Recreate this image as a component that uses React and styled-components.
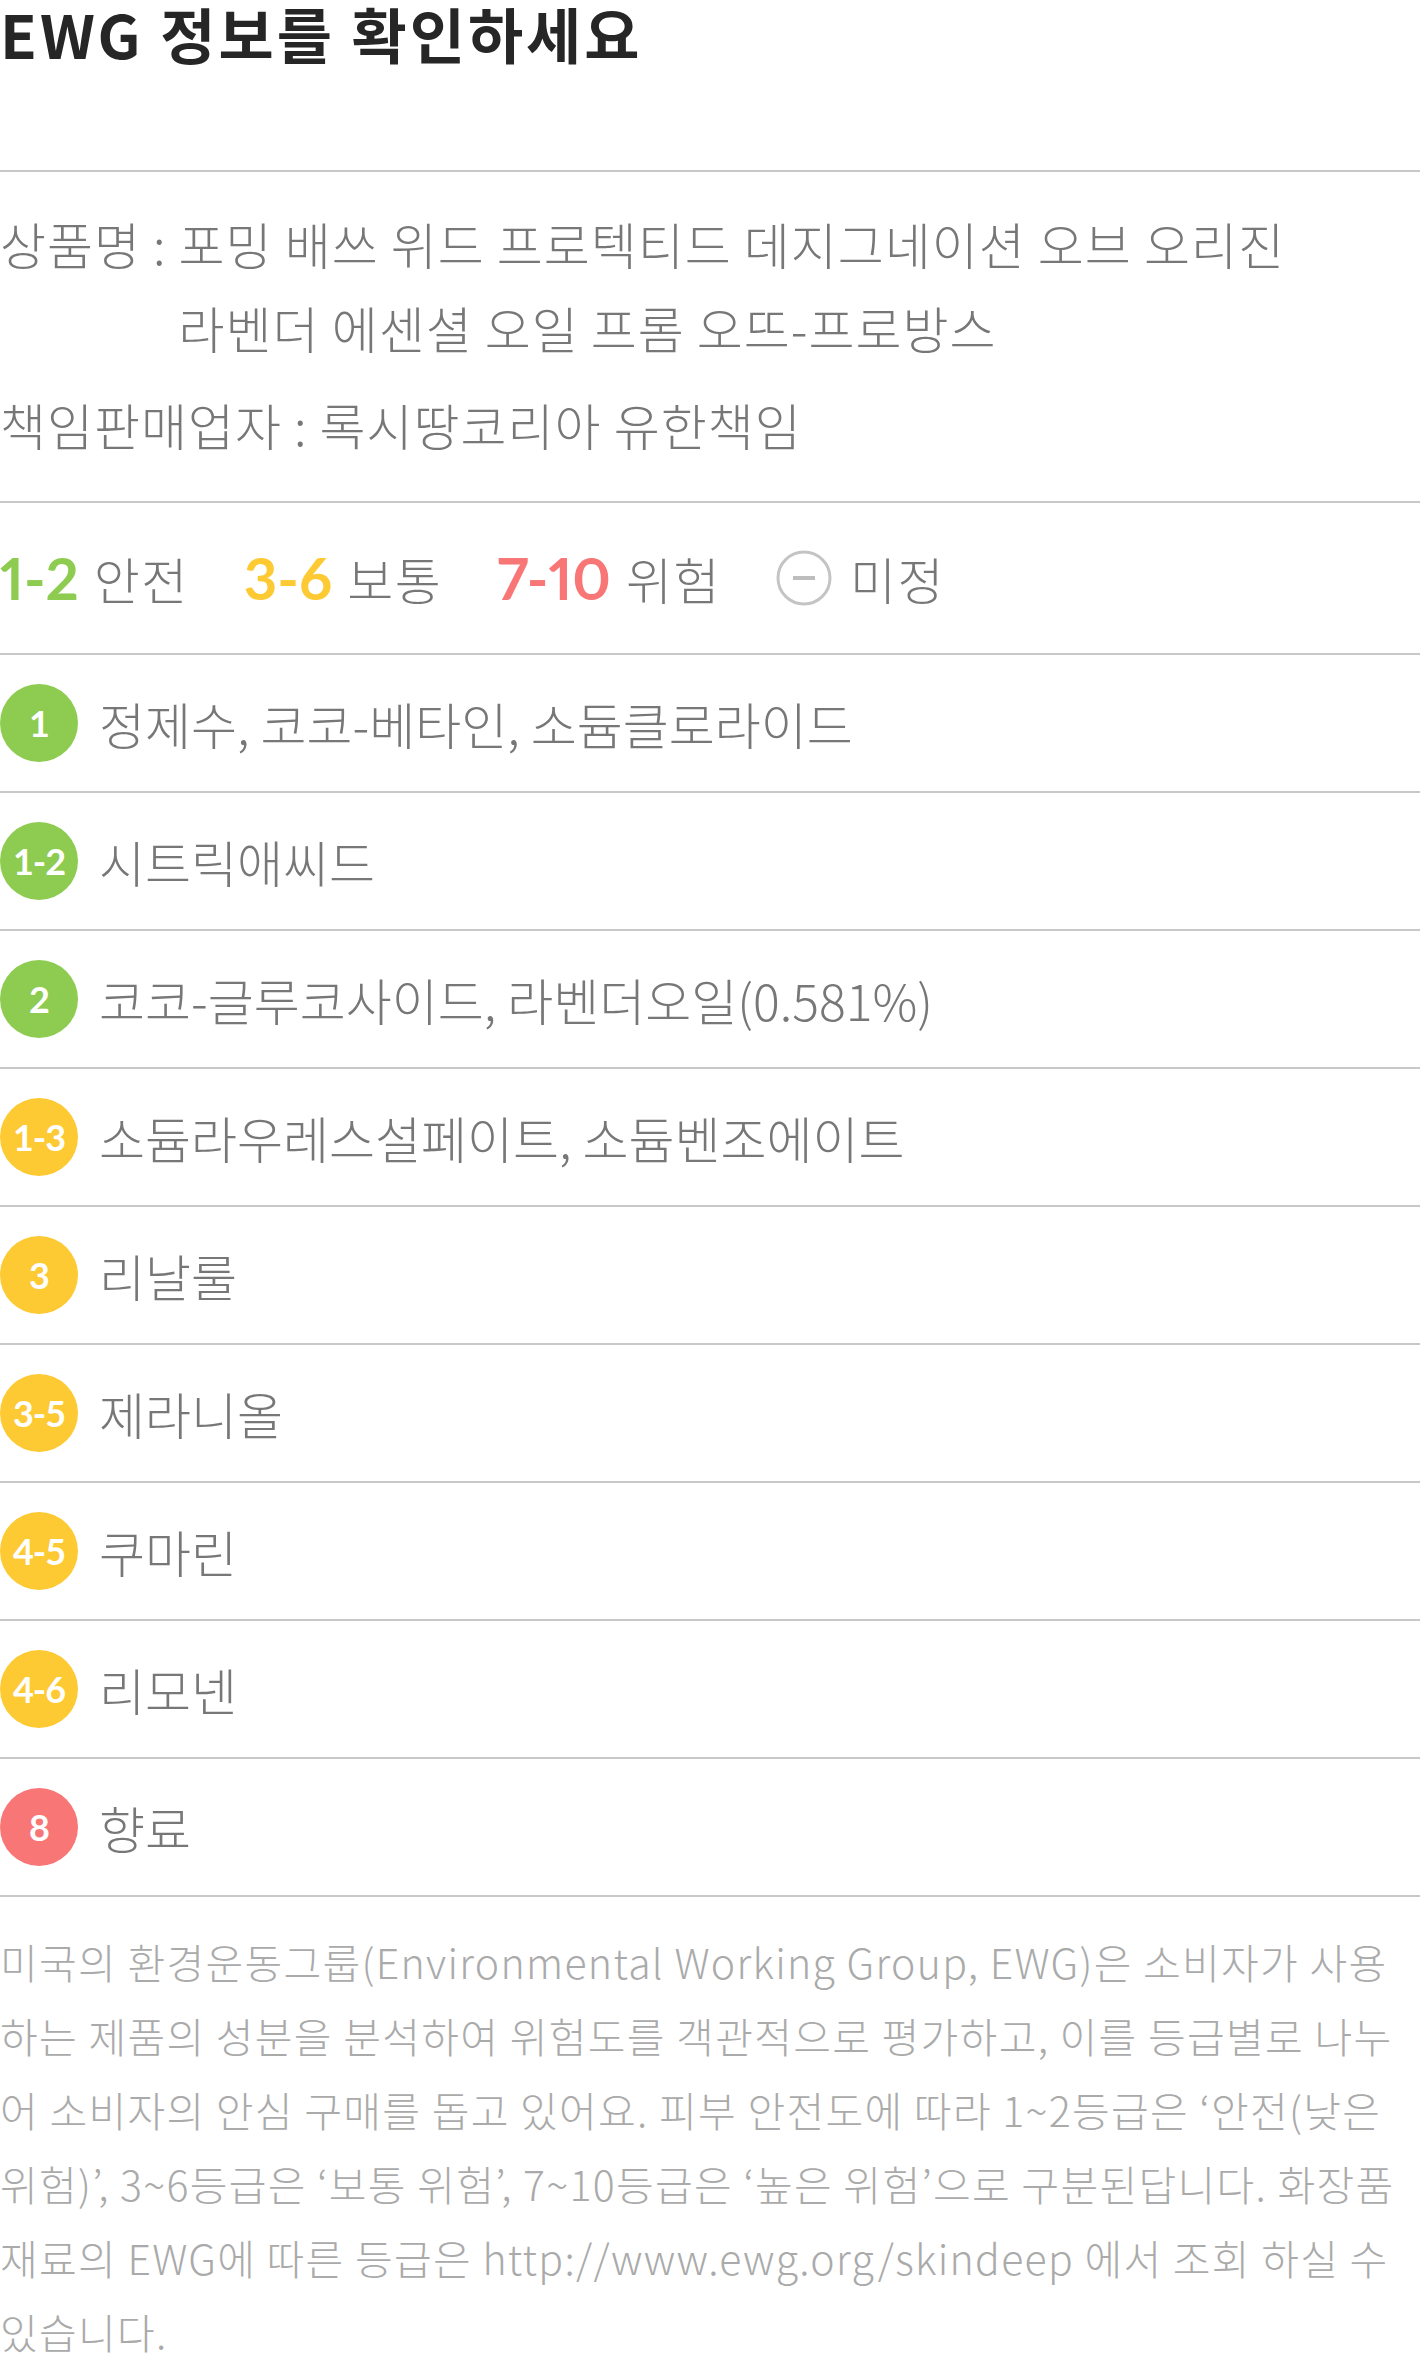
import React from "react";
import styled, { createGlobalStyle } from "styled-components";

const GREEN = "#8dcc50";
const YELLOW = "#fdca33";
const RED = "#f87676";

const GlobalStyle = createGlobalStyle`
  body {
    margin: 0;
    background: #fff;
    font-family: "Noto Sans CJK KR", "Noto Sans", sans-serif;
  }
`;

const Page = styled.div`
  width: 1420px;
  overflow: hidden;
`;

const TitleSection = styled.div`
  padding-bottom: 104px;
  border-bottom: 2px solid #c8c8c8;
`;

const Title = styled.h2`
  margin: 0;
  font-size: 60px;
  line-height: 66px;
  font-weight: 700;
  letter-spacing: 3px;
  color: #262626;
`;

const InfoSection = styled.div`
  padding: 29px 0 35px;
  border-bottom: 2px solid #c8c8c8;
  display: flex;
  flex-direction: column;
  gap: 13px;
`;

const InfoRow = styled.div`
  display: flex;
  font-size: 50px;
  line-height: 84px;
  font-weight: 300;
  letter-spacing: 1px;
  color: #777;
  word-break: keep-all;
`;

const InfoLabel = styled.span`
  flex: none;
  white-space: pre;
`;

const Legend = styled.div`
  height: 150px;
  display: flex;
  align-items: center;
  gap: 55px;
  border-bottom: 2px solid #c8c8c8;
`;

const LegendItem = styled.div`
  display: flex;
  align-items: center;
  gap: ${(p) => (p.$icon ? "18px" : "15px")};
`;

const Grade = styled.span`
  font-family: Lato, "Noto Sans", sans-serif;
  font-weight: 700;
  font-size: 58px;
  line-height: 1;
  font-variant-numeric: proportional-nums;
  color: ${(p) => p.$color};
`;

const LegendLabel = styled.span`
  font-size: 50px;
  font-weight: 300;
  letter-spacing: 1.5px;
  color: #777;
  line-height: 1;
`;

const IngredientList = styled.div`
  display: flex;
  flex-direction: column;
`;

const IngredientRow = styled.div`
  height: 136px;
  display: flex;
  align-items: center;
  gap: 21px;
  border-bottom: 2px solid #c8c8c8;
`;

const Badge = styled.span`
  flex: none;
  width: 78px;
  height: 78px;
  border-radius: 50%;
  background: ${(p) => p.$color};
  color: #fff;
  display: flex;
  align-items: center;
  justify-content: center;
  font-family: Lato, "Noto Sans", sans-serif;
  font-weight: 700;
  font-size: 36px;
  letter-spacing: -1px;
`;

const IngredientName = styled.span`
  font-size: 50px;
  font-weight: 300;
  color: #777;
  line-height: 1;
`;

const Footer = styled.p`
  margin: 0;
  padding: 27px 10px 0 0;
  font-size: 41px;
  line-height: 74px;
  font-weight: 300;
  letter-spacing: 1.3px;
  color: #aaa;
`;

const UnknownIcon = () => (
  <svg width="56" height="56" viewBox="0 0 56 56">
    <circle cx="28" cy="28" r="26" fill="none" stroke="#c4c4c4" strokeWidth="3" />
    <line x1="17" y1="28" x2="39" y2="28" stroke="#bdbdbd" strokeWidth="4" />
  </svg>
);

const ingredients = [
  { grade: "1", color: GREEN, name: "정제수, 코코-베타인, 소듐클로라이드" },
  { grade: "1-2", color: GREEN, name: "시트릭애씨드" },
  { grade: "2", color: GREEN, name: "코코-글루코사이드, 라벤더오일(0.581%)" },
  { grade: "1-3", color: YELLOW, name: "소듐라우레스설페이트, 소듐벤조에이트" },
  { grade: "3", color: YELLOW, name: "리날룰" },
  { grade: "3-5", color: YELLOW, name: "제라니올" },
  { grade: "4-5", color: YELLOW, name: "쿠마린" },
  { grade: "4-6", color: YELLOW, name: "리모넨" },
  { grade: "8", color: RED, name: "향료" },
];

export default function App() {
  return (
    <Page>
      <GlobalStyle />
      <TitleSection>
        <Title>EWG 정보를 확인하세요</Title>
      </TitleSection>

      <InfoSection>
        <InfoRow>
          <InfoLabel>상품명 : </InfoLabel>
          <span>포밍 배쓰 위드 프로텍티드 데지그네이션 오브 오리진 라벤더 에센셜 오일 프롬 오뜨-프로방스</span>
        </InfoRow>
        <InfoRow>
          <InfoLabel>책임판매업자 : </InfoLabel>
          <span>록시땅코리아 유한책임</span>
        </InfoRow>
      </InfoSection>

      <Legend>
        <LegendItem>
          <Grade $color={GREEN}>1-2</Grade>
          <LegendLabel>안전</LegendLabel>
        </LegendItem>
        <LegendItem>
          <Grade $color={YELLOW}>3-6</Grade>
          <LegendLabel>보통</LegendLabel>
        </LegendItem>
        <LegendItem>
          <Grade $color={RED}>7-10</Grade>
          <LegendLabel>위험</LegendLabel>
        </LegendItem>
        <LegendItem $icon>
          <UnknownIcon />
          <LegendLabel>미정</LegendLabel>
        </LegendItem>
      </Legend>

      <IngredientList>
        {ingredients.map((item) => (
          <IngredientRow key={item.name}>
            <Badge $color={item.color}>{item.grade}</Badge>
            <IngredientName>{item.name}</IngredientName>
          </IngredientRow>
        ))}
      </IngredientList>

      <Footer>
        미국의 환경운동그룹(Environmental Working Group, EWG)은 소비자가 사용하는 제품의 성분을 분석하여 위험도를 객관적으로 평가하고, 이를 등급별로 나누어 소비자의 안심 구매를 돕고 있어요. 피부 안전도에 따라 1~2등급은 ‘안전(낮은 위험)’, 3~6등급은 ‘보통 위험’, 7~10등급은 ‘높은 위험’으로 구분된답니다. 화장품 재료의 EWG에 따른 등급은 http://www.ewg.org/skindeep 에서 조회 하실 수 있습니다.
      </Footer>
    </Page>
  );
}
